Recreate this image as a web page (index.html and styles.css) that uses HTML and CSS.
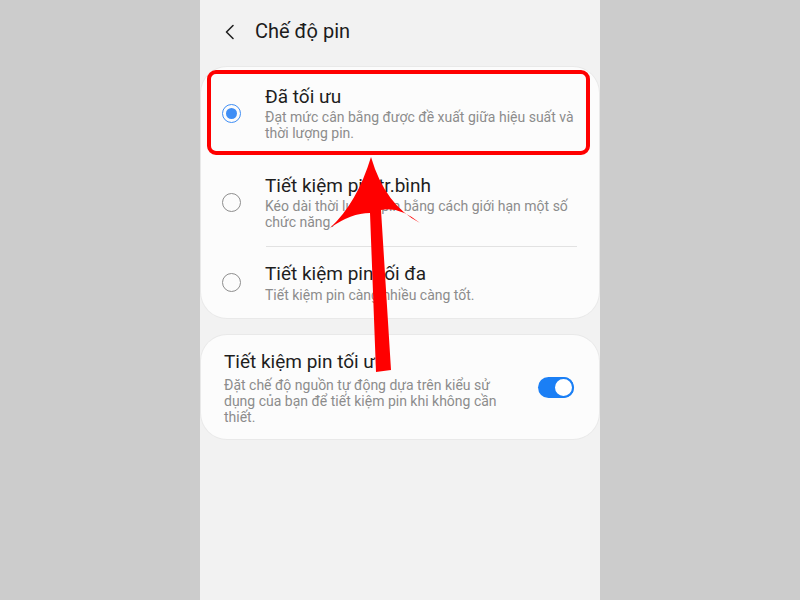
FILE: index.html
```html
<!DOCTYPE html>
<html lang="vi">
<head>
<meta charset="utf-8">
<title>Chế độ pin</title>
<link rel="stylesheet" href="styles.css">
</head>
<body>
<div class="screen">
  <div class="header">
    <svg class="back" width="12" height="16" viewBox="0 0 12 16"><path d="M9 1.5 L2.5 8 L9 14.5" fill="none" stroke="#222" stroke-width="1.6" stroke-linecap="round" stroke-linejoin="round"/></svg>
    <span class="htitle">Chế độ pin</span>
  </div>
  <div class="content">
    <div class="card card-modes">
      <div class="row row1">
        <span class="radio on"><span class="dot"></span></span>
        <div class="text">
          <div class="title">Đã tối ưu</div>
          <div class="sub">Đạt mức cân bằng được đề xuất giữa hiệu suất và thời lượng pin.</div>
        </div>
      </div>
      <div class="row row2">
        <span class="radio"></span>
        <div class="text">
          <div class="title">Tiết kiệm pin tr.bình</div>
          <div class="sub">Kéo dài thời lượng pin bằng cách giới hạn một số chức năng.</div>
        </div>
      </div>
      <div class="divider"></div>
      <div class="row row3">
        <span class="radio"></span>
        <div class="text">
          <div class="title">Tiết kiệm pin tối đa</div>
          <div class="sub sub3">Tiết kiệm pin càng nhiều càng tốt.</div>
        </div>
      </div>
    </div>
    <div class="card card-adaptive">
      <div class="text atext">
        <div class="title">Tiết kiệm pin tối ưu</div>
        <div class="sub asub">Đặt chế độ nguồn tự động dựa trên kiểu sử dụng của bạn để tiết kiệm pin khi không cần thiết.</div>
      </div>
      <span class="toggle"><span class="thumb"></span></span>
    </div>
  </div>
  <div class="highlight"></div>
  <svg class="arrow" width="400" height="600" viewBox="0 0 400 600">
    <path d="M171 157 Q185 205 220 223 Q199 206 181 210 L191 370 L176 372 L170 213 Q151 213 130 228 Q157 203 171 157 Z" fill="#ff0000"/>
  </svg>
</div>
</body>
</html>
```

FILE: styles.css
```css
html, body {
  margin: 0;
  padding: 0;
}
body {
  background: #cccccc;
  overflow: hidden;
  font-family: Roboto, "Noto Sans", "DejaVu Sans", sans-serif;
}
.screen {
  position: relative;
  width: 400px;
  height: 600px;
  margin: 0 auto;
  background: #f2f2f2;
}
.header {
  height: 62px;
  display: flex;
  align-items: center;
  padding-left: 24px;
  box-sizing: border-box;
}
.back {
  display: block;
  margin-top: 1px;
}
.htitle {
  margin-left: 19px;
  font-size: 20px;
  color: #1c1c1c;
}
.content {
  padding: 5px 1px 0 1px;
  display: flex;
  flex-direction: column;
  gap: 17px;
}
.card {
  background: #fcfcfc;
  border-radius: 26px;
  box-shadow: 0 0 0 1px #e9e9e9;
}
.row {
  display: flex;
  align-items: center;
  padding-left: 21px;
  padding-right: 18px;
}
.row1 { padding-top: 18px; padding-bottom: 15px; }
.row2 { padding-top: 18px; padding-bottom: 16px; }
.row3 { padding-top: 15px; padding-bottom: 15px; }
.radio {
  flex: none;
  width: 19px;
  height: 19px;
  box-sizing: border-box;
  border-radius: 50%;
  border: 1.5px solid #8e8e8e;
  display: flex;
  align-items: center;
  justify-content: center;
}
.radio.on {
  border: 1.8px solid #3f8ef5;
}
.dot {
  width: 11px;
  height: 11px;
  border-radius: 50%;
  background: #3f8ef5;
}
.text {
  margin-left: 24px;
  flex: 1;
}
.title {
  font-size: 19px;
  line-height: 24px;
  color: #1e1e1e;
}
.sub {
  font-size: 14px;
  line-height: 16px;
  color: #8c8c8c;
}
.sub3 { margin-top: 1px; }
.divider {
  height: 1px;
  background: #e2e2e2;
  margin: 0 22px 0 65px;
}
.card-adaptive {
  display: flex;
  align-items: center;
  padding: 15px 25px 14px 23px;
}
.atext {
  margin-left: 0;
}
.asub {
  margin-top: 3px;
  width: 285px;
}
.toggle {
  flex: none;
  width: 36px;
  height: 21px;
  border-radius: 11px;
  background: #1b7ff5;
  display: flex;
  justify-content: flex-end;
}
.thumb {
  width: 21px;
  height: 21px;
  box-sizing: border-box;
  border-radius: 50%;
  background: #ffffff;
  border: 2px solid #1b7ff5;
}
.highlight {
  position: absolute;
  left: 7px;
  top: 70px;
  width: 383px;
  height: 85px;
  box-sizing: border-box;
  border: 4px solid #ff0000;
  border-radius: 9px;
}
.arrow {
  position: absolute;
  left: 0;
  top: 0;
}
```
